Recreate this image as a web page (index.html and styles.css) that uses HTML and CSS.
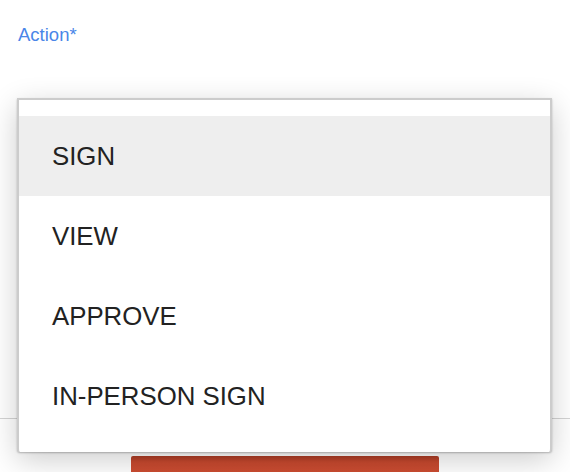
FILE: index.html
```html
<!DOCTYPE html>
<html lang="en">
<head>
    <meta charset="UTF-8">
    <meta name="viewport" content="width=device-width, initial-scale=1.0">
    <title>Action</title>
    <link rel="stylesheet" href="styles.css">
</head>
<body>
    <div class="form">
        <div class="field">
            <label class="field-label">Action*</label>
            <div class="select-area"></div>
        </div>
        <div class="footer">
            <button class="btn-primary" aria-label="Send"></button>
        </div>
    </div>

    <ul class="menu">
        <li class="menu-item active">SIGN</li>
        <li class="menu-item">VIEW</li>
        <li class="menu-item">APPROVE</li>
        <li class="menu-item">IN-PERSON SIGN</li>
    </ul>
</body>
</html>
```

FILE: styles.css
```css
body {
    font-family: "Liberation Sans", Arial, sans-serif;
    background-color: #ffffff;
    color: #222222;
    margin: 0;
    padding: 0;
    height: 472px;
    overflow: hidden;
}
.form {
    display: flex;
    flex-direction: column;
}
.field {
    padding: 24px 18px 0 18px;
    height: 394px;
}
.field-label {
    display: block;
    font-size: 18.5px;
    color: #4a86e8;
}
.footer {
    border-top: 1px solid #d4d4d4;
    display: flex;
    justify-content: center;
    padding-top: 37px;
}
.btn-primary {
    width: 308px;
    height: 16px;
    border: none;
    border-radius: 2px 2px 0 0;
    background: linear-gradient(#a83b25, #c8492f 6px, #cc4d32);
}
.menu {
    position: absolute;
    left: 17px;
    top: 98px;
    width: 531px;
    margin: 0;
    padding: 16px 0;
    list-style: none;
    background-color: #ffffff;
    border: 2px solid #cccccc;
    border-bottom: none;
    border-radius: 0 0 3px 3px;
    box-shadow: 0 1px 2px rgba(0, 0, 0, 0.25), 0 8px 30px rgba(0, 0, 0, 0.2);
}
.menu-item {
    height: 80px;
    display: flex;
    align-items: center;
    padding-left: 33px;
    font-size: 25.8px;
    color: #222222;
}
.menu-item.active {
    background-color: #eeeeee;
}
```
